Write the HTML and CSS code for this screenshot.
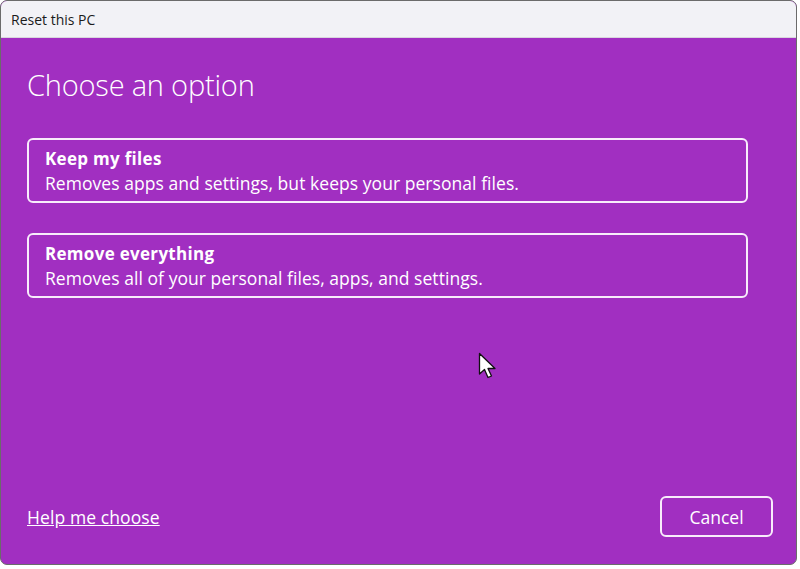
FILE: index.html
```html
<!DOCTYPE html>
<html lang="en">
<head>
  <meta charset="UTF-8" />
  <title>Reset this PC</title>
  <link rel="stylesheet" href="styles.css">
</head>
<body>
  <div class="window">
    <div class="titlebar">Reset this PC</div>
    <div class="content">
      <h1>Choose an option</h1>
      <div class="options">
        <button class="option">
          <span class="option-title">Keep my files</span>
          <span class="option-desc">Removes apps and settings, but keeps your personal files.</span>
        </button>
        <button class="option">
          <span class="option-title">Remove everything</span>
          <span class="option-desc">Removes all of your personal files, apps, and settings.</span>
        </button>
      </div>
      <div class="footer">
        <a href="#" class="help">Help me choose</a>
        <button class="cancel">Cancel</button>
      </div>
    </div>
    <svg class="cursor" width="20" height="28" viewBox="0 0 20 28">
      <path d="M1.5 1.5 L1.5 22 L6.5 17.5 L10 25.5 L13.5 24 L10 16.5 L17 16.5 Z" fill="#fff" stroke="#111" stroke-width="1.3" stroke-linejoin="round"/>
    </svg>
  </div>
</body>
</html>
```

FILE: styles.css
```css
* {
  box-sizing: border-box;
  margin: 0;
  padding: 0;
}

body {
  background: #fff;
  font-family: 'Open Sans', 'Noto Sans', sans-serif;
  color: #fff;
}

.window {
  position: relative;
  width: 797px;
  height: 565px;
  border: 1px solid #6b6b6b;
  border-radius: 7px;
  overflow: hidden;
  display: flex;
  flex-direction: column;
  background: #a12fc1;
}

.titlebar {
  height: 37px;
  background: #f2f2f6;
  color: #1b1b1b;
  font-size: 14px;
  padding: 9px 0 0 10px;
  border-bottom: 1px solid #d9d6dd;
}

.content {
  flex: 1;
  display: flex;
  flex-direction: column;
  padding: 27px 48px 27px 26px;
}

h1 {
  font-weight: 300;
  font-size: 29px;
  line-height: 40px;
  letter-spacing: -0.2px;
}

.options {
  display: flex;
  flex-direction: column;
  gap: 30px;
  margin-top: 33px;
}

.option {
  display: flex;
  flex-direction: column;
  justify-content: center;
  text-align: left;
  background: transparent;
  border: 2px solid #f8ecfb;
  border-radius: 6px;
  color: #fff;
  font-family: inherit;
  padding: 0 16px;
  height: 65px;
}

.option-title {
  font-weight: 700;
  font-size: 17px;
  line-height: 24px;
  letter-spacing: 0.3px;
}

.option-desc {
  font-size: 17.5px;
  line-height: 24px;
  letter-spacing: 0.05px;
}

.footer {
  margin-top: auto;
  display: flex;
  justify-content: space-between;
  align-items: center;
}

.help {
  color: #fff;
  font-size: 17.5px;
  letter-spacing: 0.1px;
}

.cancel {
  width: 113px;
  height: 41px;
  margin-right: -25px;
  background: transparent;
  border: 2px solid #f8ecfb;
  border-radius: 6px;
  color: #fff;
  font-family: inherit;
  font-size: 17.5px;
}

.cursor {
  position: absolute;
  left: 477px;
  top: 351px;
}
```
